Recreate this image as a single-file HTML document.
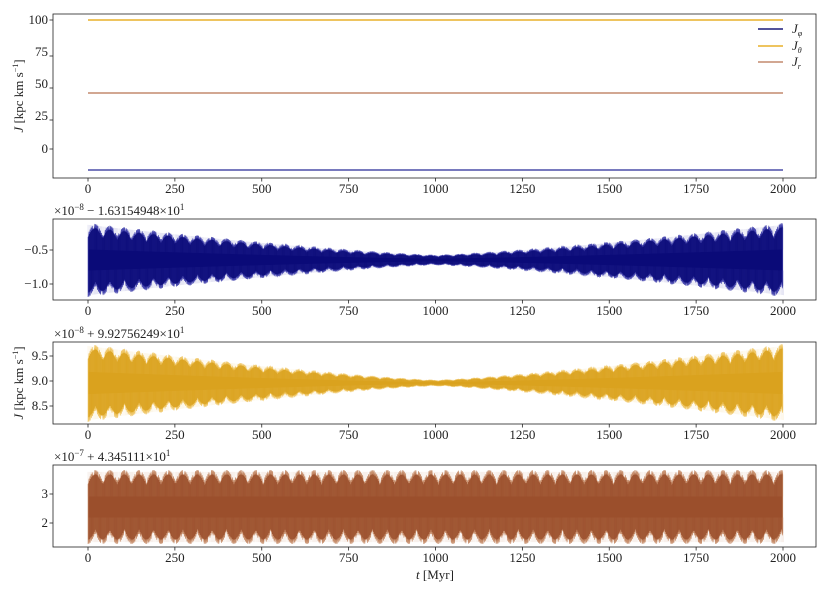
<!DOCTYPE html>
<html><head><meta charset="utf-8"><style>
body{margin:0;background:#fff}
svg text{font-family:"Liberation Serif",serif;font-size:13px;fill:#222}
</style></head><body>
<svg id="s" width="830" height="593" xmlns="http://www.w3.org/2000/svg">
<g id="g"></g>
<line x1="88" y1="20" x2="783" y2="20" stroke="#e8b12a" stroke-width="1.5"/>
<line x1="88" y1="93" x2="783" y2="93" stroke="#c48a6e" stroke-width="1.5"/>
<line x1="88" y1="170" x2="783" y2="170" stroke="#4b4fa8" stroke-width="1.5"/>
<rect x="53" y="14" width="763" height="164" fill="none" stroke="#222" stroke-width="0.8"/>
<line x1="758" y1="29" x2="783" y2="29" stroke="#1a1a7a" stroke-width="1.5"/>
<line x1="758" y1="46" x2="783" y2="46" stroke="#e8b12a" stroke-width="1.5"/>
<line x1="758" y1="62" x2="783" y2="62" stroke="#c48a6e" stroke-width="1.5"/>
<text x="792" y="33" font-style="italic">J<tspan font-size="8" dy="3">φ</tspan></text>
<text x="792" y="50" font-style="italic">J<tspan font-size="8" dy="3">θ</tspan></text>
<text x="792" y="66" font-style="italic">J<tspan font-size="8" dy="3">r</tspan></text>
<text x="48" y="24" text-anchor="end">100</text>
<text x="48" y="56" text-anchor="end">75</text>
<text x="48" y="88" text-anchor="end">50</text>
<text x="48" y="120" text-anchor="end">25</text>
<text x="48" y="153" text-anchor="end">0</text>
<text transform="translate(23,96) rotate(-90)" text-anchor="middle"><tspan font-style="italic">J</tspan> [kpc km s<tspan font-size="8" dy="-5">−1</tspan><tspan dy="5">]</tspan></text>
<rect x="53" y="219" width="763" height="81" fill="none" stroke="#222" stroke-width="0.8"/>
<text x="54" y="215">×10<tspan font-size="9" dy="-5">−8</tspan><tspan dy="5"> − 1.63154948×10</tspan><tspan font-size="9" dy="-5">1</tspan></text>
<text x="48" y="254" text-anchor="end">−0.5</text>
<text x="48" y="288" text-anchor="end">−1.0</text>
<rect x="53" y="342" width="763" height="82" fill="none" stroke="#222" stroke-width="0.8"/>
<text x="54" y="338">×10<tspan font-size="9" dy="-5">−8</tspan><tspan dy="5"> + 9.92756249×10</tspan><tspan font-size="9" dy="-5">1</tspan></text>
<text x="48" y="360" text-anchor="end">9.5</text>
<text x="48" y="385" text-anchor="end">9.0</text>
<text x="48" y="410" text-anchor="end">8.5</text>
<text transform="translate(23,383) rotate(-90)" text-anchor="middle"><tspan font-style="italic">J</tspan> [kpc km s<tspan font-size="8" dy="-5">−1</tspan><tspan dy="5">]</tspan></text>
<rect x="53" y="465" width="763" height="82" fill="none" stroke="#222" stroke-width="0.8"/>
<text x="54" y="461">×10<tspan font-size="9" dy="-5">−7</tspan><tspan dy="5"> + 4.345111×10</tspan><tspan font-size="9" dy="-5">1</tspan></text>
<text x="48" y="498" text-anchor="end">3</text>
<text x="48" y="527" text-anchor="end">2</text>
<text x="435" y="579" text-anchor="middle"><tspan font-style="italic">t</tspan> [Myr]</text>
</svg>
<script>
var g=document.getElementById('g'),NS='http://www.w3.org/2000/svg';
function el(n,a){var e=document.createElementNS(NS,n);for(var k in a)e.setAttribute(k,a[k]);g.appendChild(e);return e;}
function X(t){return 88+t*0.3475;}
var bottoms=[178,300,424,547];
var ticks=[0,250,500,750,1000,1250,1500,1750,2000];
for(var p=0;p<4;p++){ticks.forEach(function(t){
 el('line',{x1:X(t),x2:X(t),y1:bottoms[p],y2:bottoms[p]+3.5,stroke:'#222','stroke-width':0.8});
 var tx=el('text',{x:X(t),y:bottoms[p]+15,'text-anchor':'middle'});tx.textContent=t;});}
[[20,56,88,120,149],[250,284],[356,381,406],[494,523]].forEach(function(a){a.forEach(function(y){el('line',{x1:49.5,x2:53,y1:y,y2:y,stroke:'#222','stroke-width':0.8});});});
function env(c,ampf,col,light,per){
 var top=[],bot=[];
 for(var t=0;t<=2000;t+=1.5){
  var A=ampf(t),ph=Math.abs(Math.sin(Math.PI*t/per));
  var sp=(Math.sin(t*2.3)>0.3)?1:0.88;
  top.push(X(t).toFixed(1)+','+(c-A*(0.7+0.3*ph)*sp).toFixed(1));
  var ph2=Math.abs(Math.sin(Math.PI*(t+per/2)/per));
  var sp2=(Math.cos(t*1.9)>0.3)?1:0.88;
  bot.push(X(t).toFixed(1)+','+(c+A*(0.7+0.3*ph2)*sp2).toFixed(1));
 }
 el('polygon',{points:top.concat(bot.reverse()).join(' '),fill:col,stroke:light,'stroke-width':0.6});
 for(var t=0;t<=2000;t+=3.3){var A=ampf(t)*0.95;el('line',{x1:X(t),x2:X(t),y1:c-A,y2:c-A*0.3,stroke:light,'stroke-width':0.3,opacity:0.45});el('line',{x1:X(t+1.6),x2:X(t+1.6),y1:c+A*0.3,y2:c+A,stroke:light,'stroke-width':0.3,opacity:0.45});}
}
env(260,function(t){var d=Math.abs(t-1000)/1000;return 5+32*Math.pow(d,1.3);},'#0a0a78','#4a4ab0',42);
env(383,function(t){var d=Math.abs(t-1000)/1000;return 3+36*Math.pow(d,1.3);},'#daa21e','#f0c86a',42);
env(507,function(t){return 37;},'#9b4f2c','#c8906e',42);
</script>
</body></html>
